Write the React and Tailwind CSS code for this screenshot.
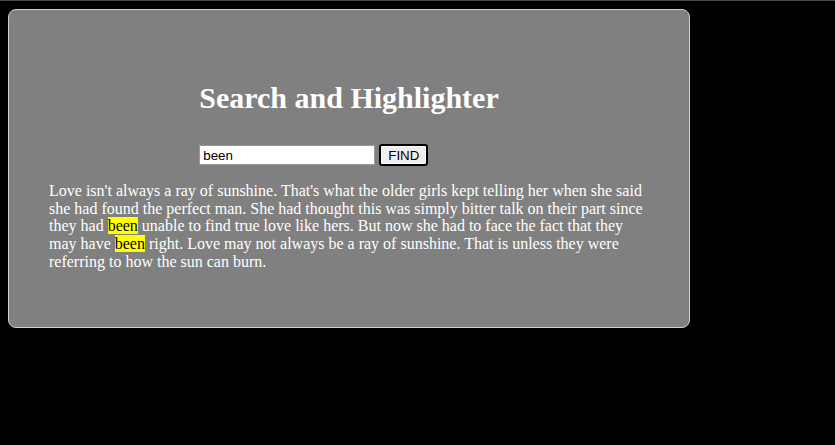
import React from 'react';

const TEXT =
  "Love isn't always a ray of sunshine. That's what the older girls kept telling her when she said she had found the perfect man. She had thought this was simply bitter talk on their part since they had been unable to find true love like hers. But now she had to face the fact that they may have been right. Love may not always be a ray of sunshine. That is unless they were referring to how the sun can burn.";

const Highlighted = ({ text, word }) => {
  const parts = text.split(new RegExp(`(${word})`, 'g'));
  return parts.map((p, i) =>
    p === word ? (
      <mark key={i} className="bg-[#ffff00] text-black">{p}</mark>
    ) : (
      <React.Fragment key={i}>{p}</React.Fragment>
    )
  );
};

export default function App() {
  return (
    <div className="min-h-[445px] bg-black border-t border-[#4a4a4a] pt-2 pl-2 font-['Liberation_Serif',serif]">
      <div className="w-[682px] h-[319px] bg-[#808080] border border-[#d0d0d0] rounded-lg flex flex-col items-center">
        <div className="mt-[70px] flex flex-col">
          <h1 className="text-[30px] leading-[35px] font-bold text-white">Search and Highlighter</h1>
          <div className="mt-[29px] flex items-center gap-[4px]">
            <input
              defaultValue="been"
              className="w-[176px] h-[20px] bg-white border border-[#9a9a9a] px-[3px] text-[13.33px] text-black font-['Liberation_Sans',sans-serif] outline-none"
            />
            <button className="h-[22px] px-[7px] bg-[#efefef] border-2 border-black rounded-[3px] shadow-[inset_0_0_0_1px_#fff] text-[13.33px] text-black font-['Liberation_Sans',sans-serif]">
              FIND
            </button>
          </div>
        </div>
        <p className="mt-[16px] w-[600px] text-white text-[16px] leading-[17.7px]">
          <Highlighted text={TEXT} word="been" />
        </p>
      </div>
    </div>
  );
}
